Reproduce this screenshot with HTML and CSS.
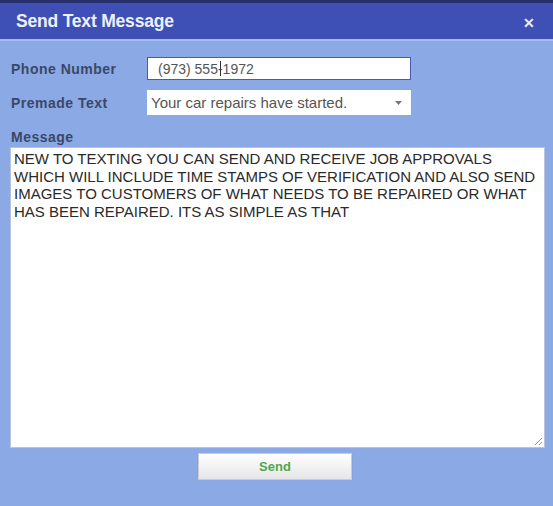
FILE: index.html
```html
<!DOCTYPE html>
<html>
<head>
<meta charset="utf-8">
<link rel="stylesheet" href="styles.css">
</head>
<body>
<div class="topstrip"></div>
<div class="dialog">
  <div class="titlebar">
    <span class="title">Send Text Message</span>
    <span class="close">&#x2715;</span>
  </div>
  <div class="content">
    <div class="row row-phone">
      <label class="label">Phone Number</label>
      <div class="field phone">(973) 555-<span class="caret"></span>1972</div>
    </div>
    <div class="row row-premade">
      <label class="label">Premade Text</label>
      <div class="field select">
        <span>Your car repairs have started.</span>
        <svg class="arrow" width="7" height="4" viewBox="0 0 7 4"><path d="M0 0H7L3.5 4Z" fill="#777"/></svg>
      </div>
    </div>
    <label class="label msg-label">Message</label>
    <div class="textarea">NEW TO TEXTING YOU CAN SEND AND RECEIVE JOB APPROVALS WHICH WILL INCLUDE TIME STAMPS OF VERIFICATION AND ALSO SEND IMAGES TO CUSTOMERS OF WHAT NEEDS TO BE REPAIRED OR WHAT HAS BEEN REPAIRED. ITS AS SIMPLE AS THAT
      <svg class="grip" width="9" height="9" viewBox="0 0 9 9"><path d="M8 1L1 8M8 5L5 8" stroke="#999" stroke-width="1"/></svg>
    </div>
    <div class="actions">
      <button class="send">Send</button>
    </div>
  </div>
</div>
</body>
</html>
```
FILE: styles.css
```css
html, body {
  margin: 0;
  padding: 0;
  background: #8aa9e5;
  font-family: "Liberation Sans", Arial, sans-serif;
}
.topstrip {
  height: 3px;
  background: #27306a;
}
.dialog {
  display: flex;
  flex-direction: column;
}
.titlebar {
  height: 36px;
  background: #3e50b5;
  display: flex;
  align-items: center;
  justify-content: space-between;
  padding: 0 18px 0 16px;
  border-bottom: 2px solid #a7bff0;
}
.title {
  color: #eef1fb;
  font-size: 17.5px;
  font-weight: bold;
  letter-spacing: -0.2px;
}
.close {
  color: #e8ecf8;
  font-size: 14px;
  font-weight: bold;
  margin-top: 4px;
}
.content {
  display: flex;
  flex-direction: column;
  padding: 16px 8px 0 10px;
}
.row {
  display: flex;
  align-items: center;
}
.row-premade {
  margin-top: 10px;
}
.label {
  color: #3a4868;
  font-size: 14px;
  font-weight: bold;
  letter-spacing: 0.5px;
  width: 137px;
  padding-left: 1px;
  box-sizing: border-box;
}
.field {
  width: 264px;
  box-sizing: border-box;
  background: #fff;
  color: #555;
  font-size: 14px;
  display: flex;
  align-items: center;
}
.phone {
  height: 23px;
  border: 1px solid #4b59b5;
  padding-left: 10px;
}
.caret {
  display: inline-block;
  width: 1px;
  height: 15px;
  background: #333;
  margin-left: -3px;
  margin-right: 2px;
}
.select {
  height: 25px;
  padding: 0 9px 0 4px;
  justify-content: space-between;
  font-size: 15px;
}
.msg-label {
  margin-top: 14px;
  line-height: 17px;
}
.textarea {
  position: relative;
  margin-top: 1px;
  width: 535px;
  height: 301px;
  box-sizing: border-box;
  background: #fff;
  border: 1px solid #b8c4dc;
  padding: 2px 3px;
  font-size: 15px;
  line-height: 17.5px;
  color: #2a2a2a;
}
.grip {
  position: absolute;
  right: 1px;
  bottom: 1px;
}
.actions {
  display: flex;
  padding: 5px 0 0 188px;
}
.send {
  width: 154px;
  height: 27px;
  border: 1px solid #c9ccd2;
  background: linear-gradient(#ffffff, #e6e6e8);
  color: #4ea652;
  font-family: "Liberation Sans", Arial, sans-serif;
  font-size: 13px;
  font-weight: bold;
  box-shadow: 0 1px 1px rgba(60, 70, 110, 0.25);
}
```
